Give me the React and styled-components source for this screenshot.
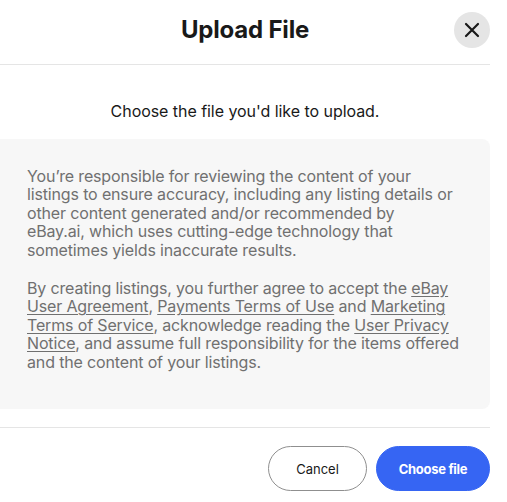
import React from 'react';
import styled, { createGlobalStyle } from 'styled-components';

const GlobalStyle = createGlobalStyle`
  html, body {
    margin: 0;
    padding: 0;
    background: #ffffff;
  }
  body {
    font-family: Inter, "Noto Sans", sans-serif;
    color: #191919;
  }
`;

const Dialog = styled.div`
  width: 490px;
  height: 502px;
  display: flex;
  flex-direction: column;
  background: #ffffff;
  overflow: hidden;
`;

const Header = styled.header`
  height: 65px;
  box-sizing: border-box;
  border-bottom: 1px solid #e5e5e5;
  display: grid;
  grid-template-columns: 36px 1fr 36px;
  align-items: center;
  padding: 0 0 4px 0;
`;

const Title = styled.h2`
  grid-column: 2;
  margin: 0;
  text-align: center;
  font-size: 24px;
  font-weight: 700;
  color: #191919;
  letter-spacing: -0.2px;
`;

const CloseButton = styled.button`
  grid-column: 3;
  width: 36px;
  height: 36px;
  border: none;
  border-radius: 50%;
  background: #e5e5e5;
  display: flex;
  align-items: center;
  justify-content: center;
  padding: 0;
  color: #191919;
  cursor: pointer;
`;

const Body = styled.main`
  flex: 1;
  display: flex;
  flex-direction: column;
  align-items: stretch;
  padding-top: 37px;
`;

const Lead = styled.p`
  margin: 0 0 18px 0;
  text-align: center;
  font-size: 16px;
  line-height: 19px;
  letter-spacing: -0.05px;
  color: #191919;
`;

const Notice = styled.section`
  background: #f7f7f7;
  border-radius: 0 8px 8px 0;
  padding: 28px 20px 18px 27px;
  color: #707070;
  font-size: 16px;
  line-height: 18.4px;
  letter-spacing: -0.15px;
`;

const Paragraph = styled.p`
  margin: 0 0 20px 0;
`;

const Link = styled.a`
  color: inherit;
  text-decoration: underline;
  text-underline-offset: 2px;
`;

const Footer = styled.footer`
  margin-top: 18px;
  border-top: 1px solid #e5e5e5;
  display: flex;
  justify-content: flex-end;
  gap: 9px;
  padding-top: 18px;
  padding-bottom: 11px;
`;

const Button = styled.button`
  height: 45px;
  width: ${(p) => (p.$primary ? '114px' : '99px')};
  border-radius: 23px;
  font-family: inherit;
  font-size: 13px;
  font-weight: ${(p) => (p.$primary ? 700 : 400)};
  letter-spacing: ${(p) => (p.$primary ? '-0.3px' : '0')};
  border: 1px solid ${(p) => (p.$primary ? '#3665f3' : '#8f8f8f')};
  background: ${(p) => (p.$primary ? '#3665f3' : '#ffffff')};
  color: ${(p) => (p.$primary ? '#ffffff' : '#191919')};
  padding: 0;
  cursor: pointer;
`;

export default function App() {
  return (
    <>
      <GlobalStyle />
      <Dialog>
        <Header>
          <Title>Upload File</Title>
          <CloseButton aria-label="Close">
            <svg width="16" height="16" viewBox="0 0 16 16" fill="none">
              <path d="M2 2L14 14M14 2L2 14" stroke="currentColor" strokeWidth="2.2" strokeLinecap="round" />
            </svg>
          </CloseButton>
        </Header>
        <Body>
          <Lead>Choose the file you'd like to upload.</Lead>
          <Notice>
            <Paragraph>
              You’re responsible for reviewing the content of your
              <br />
              listings to ensure accuracy, including any listing details or
              <br />
              other content generated and/or recommended by
              <br />
              eBay.ai, which uses cutting-edge technology that
              <br />
              sometimes yields inaccurate results.
            </Paragraph>
            <Paragraph>
              By creating listings, you further agree to accept the <Link href="#">eBay</Link>
              <br />
              <Link href="#">User Agreement</Link>, <Link href="#">Payments Terms of Use</Link> and{' '}
              <Link href="#">Marketing</Link>
              <br />
              <Link href="#">Terms of Service</Link>, acknowledge reading the <Link href="#">User Privacy</Link>
              <br />
              <Link href="#">Notice</Link>, and assume full responsibility for the items offered
              <br />
              and the content of your listings.
            </Paragraph>
          </Notice>
          <Footer>
            <Button>Cancel</Button>
            <Button $primary>Choose file</Button>
          </Footer>
        </Body>
      </Dialog>
    </>
  );
}
